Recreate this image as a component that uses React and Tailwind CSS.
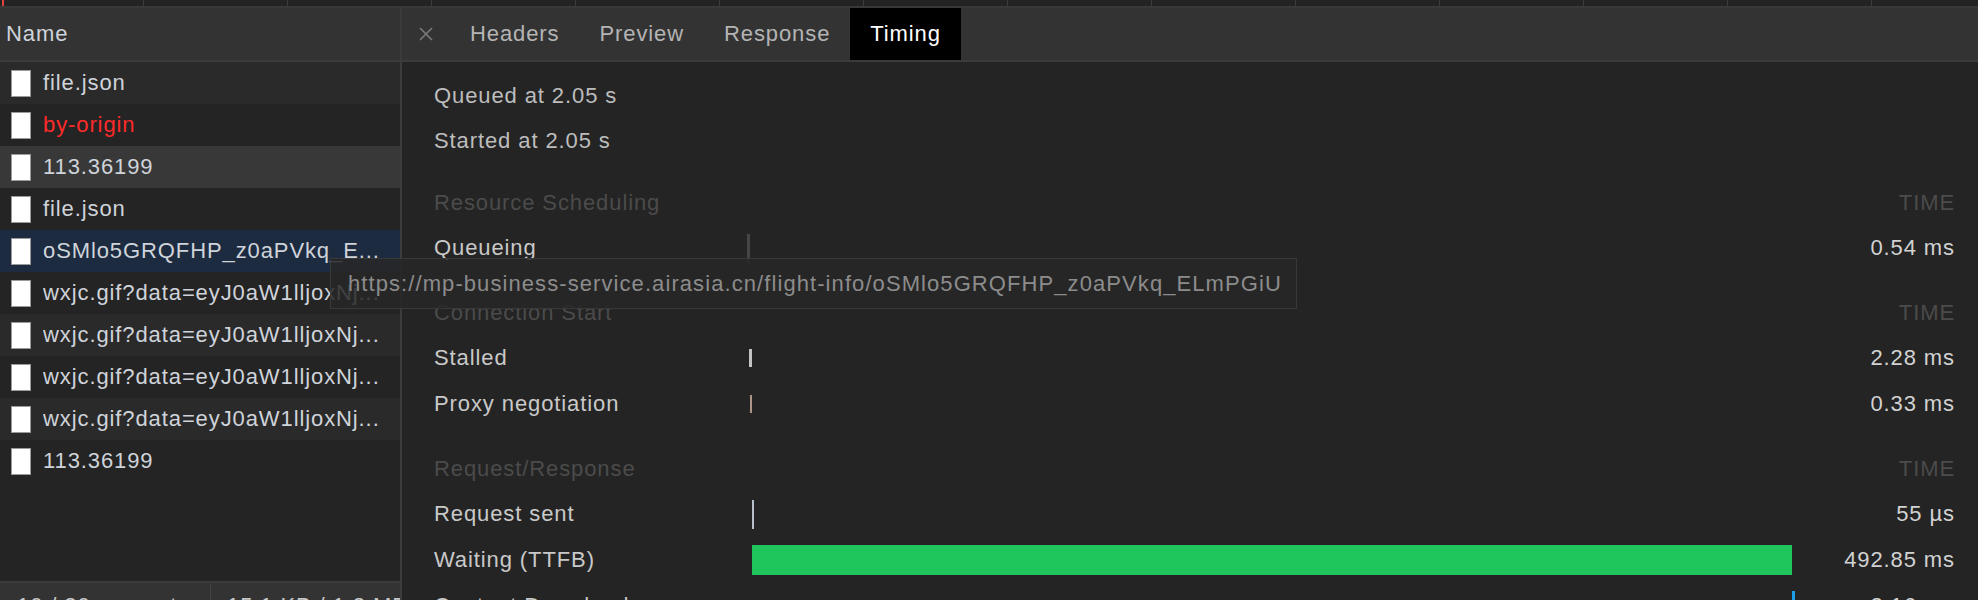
import React from "react";

const FONT = { fontFamily: '"Liberation Sans", Arial, Helvetica, sans-serif' };

const rows = [
  { name: "file.json", bg: "bg-[#2a2a2a]" },
  { name: "by-origin", bg: "bg-[#242424]", red: true },
  { name: "113.36199", bg: "bg-[#383838]" },
  { name: "file.json", bg: "bg-[#242424]" },
  { name: "oSMlo5GRQFHP_z0aPVkq_E...", bg: "bg-[#1c2b40]" },
  { name: "wxjc.gif?data=eyJ0aW1lljoxNj...", bg: "bg-[#242424]" },
  { name: "wxjc.gif?data=eyJ0aW1lljoxNj...", bg: "bg-[#2a2a2a]" },
  { name: "wxjc.gif?data=eyJ0aW1lljoxNj...", bg: "bg-[#242424]" },
  { name: "wxjc.gif?data=eyJ0aW1lljoxNj...", bg: "bg-[#2a2a2a]" },
  { name: "113.36199", bg: "bg-[#242424]" },
];

function FileIcon() {
  return (
    <div className="w-[20px] h-[27px] bg-white border border-[#9a9a9a] shrink-0" />
  );
}

function SectionHeader({ title }) {
  return (
    <div className="flex items-center h-[44px] mt-[20px] pl-[32px] pr-[23px] text-[#4b4b4b]">
      <div className="flex-1">{title}</div>
      <div>TIME</div>
    </div>
  );
}

function TimingRow({ label, value, children }) {
  return (
    <div className="flex items-center h-[46px] pl-[32px] pr-[23px]">
      <div className="w-[313px] shrink-0 text-[#c9c9c9]">{label}</div>
      <div className="flex-1 h-full flex items-center">{children}</div>
      <div className="w-[150px] text-right text-[#d2d2d2]">{value}</div>
    </div>
  );
}

export default function App() {
  return (
    <div
      style={FONT}
      className="relative w-[1978px] h-[600px] overflow-hidden bg-[#242424] flex flex-col text-[22px] tracking-[0.9px] leading-[26px]"
    >
      {/* top overview strip */}
      <div className="h-[8px] shrink-0 flex bg-[#232323] border-b-2 border-[#393939]">
        <div className="w-[144px] shrink-0 border-r border-[#3a3a3a] flex">
          <div className="ml-[2px] w-[2px] h-full bg-[#e0443c]" />
        </div>
        {Array.from({ length: 13 }).map((_, i) => (
          <div key={i} className="w-[144px] shrink-0 border-r border-[#3a3a3a]" />
        ))}
      </div>

      <div className="flex flex-1 min-h-0">
        {/* left pane */}
        <div className="w-[402px] shrink-0 flex flex-col border-r-2 border-[#3b3b3b]">
          <div className="h-[54px] shrink-0 bg-[#333333] border-b-2 border-[#3b3b3b] flex items-center pl-[6px] text-[#cfd3da]">
            Name
          </div>
          {rows.map((r, i) => (
            <div
              key={i}
              className={`h-[42px] shrink-0 flex items-center pl-[11px] gap-[12px] ${r.bg}`}
            >
              <FileIcon />
              <div
                className={`whitespace-nowrap overflow-hidden ${
                  r.red ? "text-[#ff2a2a]" : "text-[#cfd3da]"
                }`}
              >
                {r.name}
              </div>
            </div>
          ))}
          <div className="flex-1" />
          <div className="h-[19px] shrink-0 bg-[#333333] border-t-2 border-[#3b3b3b] flex text-[#c8c8c8] whitespace-nowrap overflow-hidden">
            <div className="w-[211px] shrink-0 pl-[17px] pt-[10px] border-r border-[#444] overflow-hidden">10 / 20 requests</div>
            <div className="pl-[16px] pt-[10px]">15.1 KB / 1.2 MB</div>
          </div>
        </div>

        {/* right pane */}
        <div className="flex-1 flex flex-col min-w-0">
          <div className="h-[54px] shrink-0 bg-[#333333] border-b-2 border-[#3b3b3b] flex items-stretch text-[#b4b4b4]">
            <div className="w-[48px] flex items-center justify-center">
              <svg width="14" height="14" viewBox="0 0 14 14">
                <path d="M1 1 L13 13 M13 1 L1 13" stroke="#7a7a7a" strokeWidth="1.6" />
              </svg>
            </div>
            <div className="px-[20px] flex items-center">Headers</div>
            <div className="px-[20px] flex items-center">Preview</div>
            <div className="px-[20px] flex items-center">Response</div>
            <div className="px-[20px] flex items-center bg-black text-white">Timing</div>
          </div>

          <div className="flex-1 flex flex-col pt-[11px]">
            <div className="h-[45px] flex items-center pl-[32px] text-[#bdbdbd]">Queued at 2.05 s</div>
            <div className="h-[45px] flex items-center pl-[32px] text-[#bdbdbd]">Started at 2.05 s</div>

            <div className="-mt-[2px]">
              <SectionHeader title="Resource Scheduling" />
            </div>
            <TimingRow label="Queueing" value="0.54 ms">
              <div className="w-[3px] h-[29px] bg-[#464646]" />
            </TimingRow>

            <SectionHeader title="Connection Start" />
            <TimingRow label="Stalled" value="2.28 ms">
              <div className="ml-[2px] w-[3px] h-[18px] bg-[#c4c4c4]" />
            </TimingRow>
            <TimingRow label="Proxy negotiation" value="0.33 ms">
              <div className="ml-[3px] w-[2px] h-[18px] bg-[#b09488]" />
            </TimingRow>

            <SectionHeader title="Request/Response" />
            <TimingRow label="Request sent" value="55 µs">
              <div className="ml-[5px] w-[2px] h-[29px] bg-[#b8c0cc]" />
            </TimingRow>
            <TimingRow label="Waiting (TTFB)" value="492.85 ms">
              <div className="ml-[5px] w-[1040px] h-[30px] bg-[#1fc65b]" />
            </TimingRow>
            <TimingRow label="Content Download" value="2.16 ms">
              <div className="ml-[1045px] w-[3px] h-[30px] bg-[#1aa0ea]" />
            </TimingRow>
          </div>
        </div>
      </div>

      {/* tooltip */}
      <div className="absolute left-[330px] top-[258px] w-[967px] h-[51px] bg-[#272727]/85 border border-[#383838] flex items-center pl-[17px] text-[#8c8c8c] whitespace-nowrap tracking-[1.08px]">
        https://mp-business-service.airasia.cn/flight-info/oSMlo5GRQFHP_z0aPVkq_ELmPGiU
      </div>
    </div>
  );
}
